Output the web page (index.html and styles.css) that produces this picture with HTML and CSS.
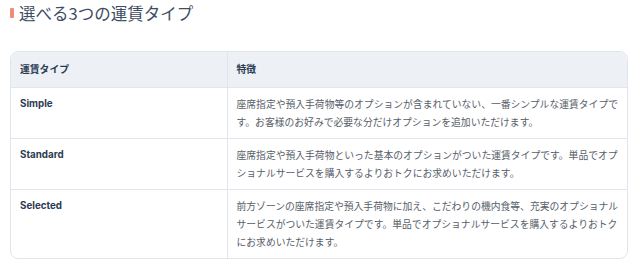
FILE: index.html
```html
<!DOCTYPE html>
<html lang="ja">
<head>
<meta charset="utf-8">
<title>選べる3つの運賃タイプ</title>
<link rel="stylesheet" href="styles.css">
</head>
<body>
<section class="fare">
  <h2 class="fare-title"><span class="fare-mark"></span>選べる3つの運賃タイプ</h2>
  <div class="fare-table-wrap">
    <table class="fare-table">
      <thead>
        <tr>
          <th class="col-type">運賃タイプ</th>
          <th class="col-desc">特徴</th>
        </tr>
      </thead>
      <tbody>
        <tr>
          <td class="col-type">Simple</td>
          <td class="col-desc">座席指定や預入手荷物等のオプションが含まれていない、一番シンプルな運賃タイプです。お客様のお好みで必要な分だけオプションを追加いただけます。</td>
        </tr>
        <tr>
          <td class="col-type">Standard</td>
          <td class="col-desc">座席指定や預入手荷物といった基本のオプションがついた運賃タイプです。単品でオプショナルサービスを購入するよりおトクにお求めいただけます。</td>
        </tr>
        <tr>
          <td class="col-type">Selected</td>
          <td class="col-desc">前方ゾーンの座席指定や預入手荷物に加え、こだわりの機内食等、充実のオプショナルサービスがついた運賃タイプです。単品でオプショナルサービスを購入するよりおトクにお求めいただけます。</td>
        </tr>
      </tbody>
    </table>
  </div>
</section>
</body>
</html>
```
FILE: styles.css
```css
html, body {
  margin: 0;
  padding: 0;
  background: #ffffff;
}

body {
  font-family: Inter, "Noto Sans CJK JP", sans-serif;
}

.fare {
  padding: 0 12px 0 10px;
}

.fare-title {
  display: flex;
  align-items: center;
  gap: 5px;
  margin: 0;
  height: 26px;
  font-family: "Noto Sans CJK JP", sans-serif;
  font-size: 16.5px;
  font-weight: 400;
  color: #3e4d63;
  line-height: 26px;
}

.fare-mark {
  display: block;
  width: 4px;
  height: 10px;
  background: #f28b7c;
  border-radius: 1px;
}

.fare-table-wrap {
  margin-top: 25px;
  width: 618px;
  box-sizing: border-box;
  border: 1px solid #e1e6ee;
  border-radius: 8px;
  overflow: hidden;
}

.fare-table {
  width: 100%;
  border-collapse: collapse;
  table-layout: fixed;
  font-size: 9.8px;
}

.fare-table th,
.fare-table td {
  box-sizing: border-box;
  text-align: left;
  vertical-align: top;
  line-height: 18px;
  padding: 7px 8px 7px 9px;
}

.fare-table th {
  background: #edf1f6;
  color: #2b3b52;
  font-weight: 700;
  padding-top: 8.3px;
  padding-bottom: 8.3px;
  font-family: "Noto Sans CJK JP", sans-serif;
}

.fare-table tbody tr {
  border-top: 1px solid #e1e6ee;
}

.fare-table .col-type {
  width: 216px;
  border-right: 1px solid #e1e6ee;
}

.fare-table td.col-type {
  font-weight: 700;
  color: #2b3b52;
}

.fare-table td.col-desc {
  color: #575e69;
  font-family: "Noto Sans CJK JP", sans-serif;
}
```
